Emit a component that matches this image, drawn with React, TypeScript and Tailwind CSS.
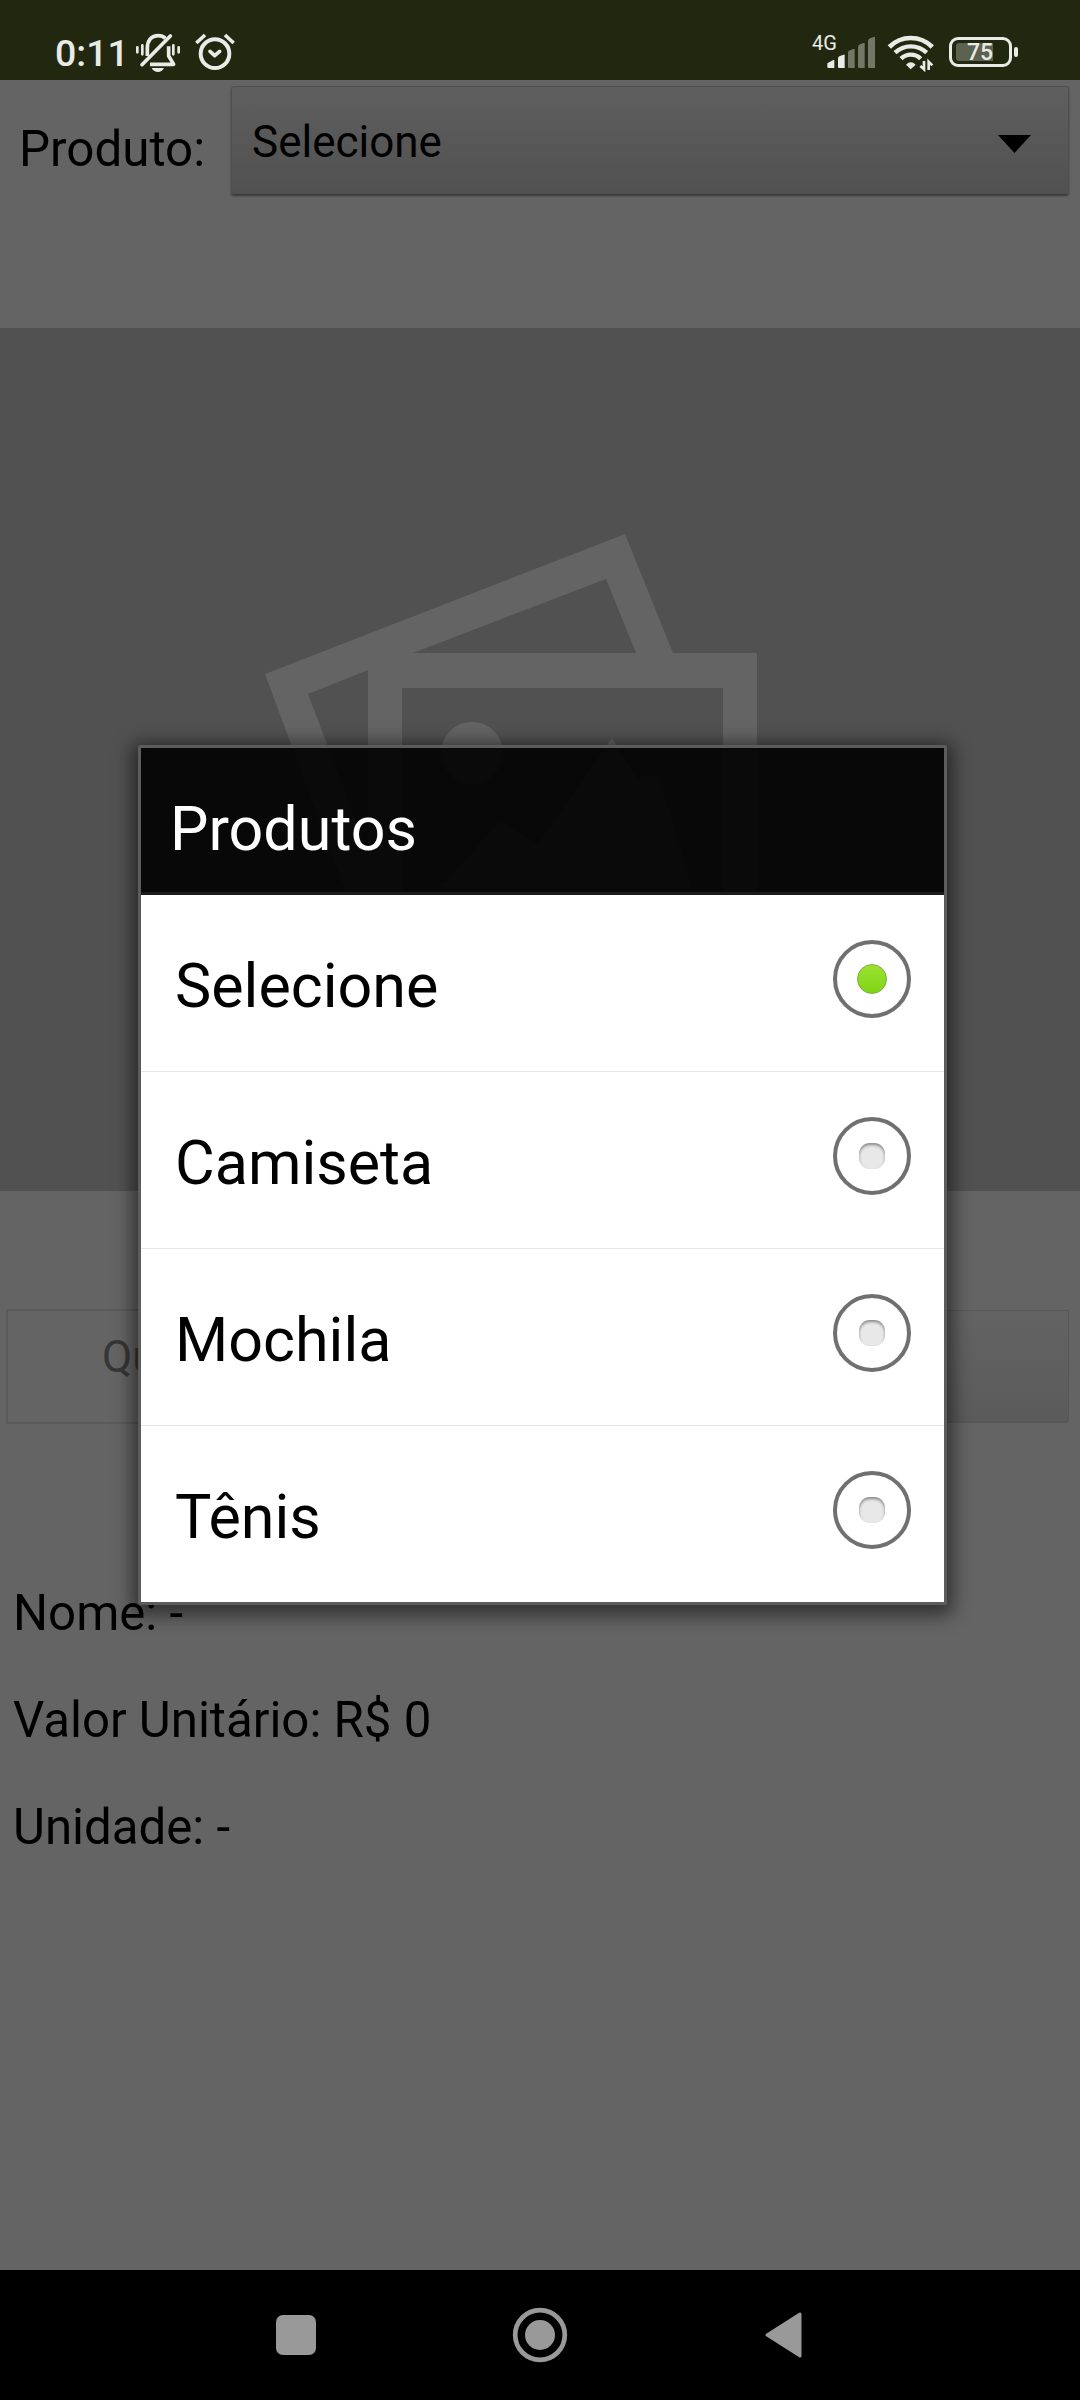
import React from "react";

function BellOffIcon() {
  return (
    <svg className="h-[44px] w-[48px] shrink-0" viewBox="402 93 144 132" fill="none" stroke="#e9ebe6">
      <g strokeLinecap="round" strokeWidth="8">
        <path d="M412 142V157M427 136V163M520 136V163M536 142V157" />
        <path d="M442 168V145C442 121 454 107 475 107C484 107 491 110 496 115" strokeWidth="11" strokeLinecap="butt" />
        <path d="M450 193H521L506 168V139" strokeWidth="11" strokeLinejoin="round" strokeLinecap="butt" />
        <path d="M426 194L511 108" strokeWidth="11" />
      </g>
      <path d="M455 204H492C488 212 481 216 474 216C466 216 459 212 455 204Z" fill="#e9ebe6" stroke="none" />
    </svg>
  );
}

function AlarmIcon() {
  return (
    <svg className="h-[44px] w-[44px] shrink-0" viewBox="578 93 132 132" fill="none" stroke="#e9ebe6">
      <circle cx="644" cy="161" r="43" strokeWidth="12" />
      <path d="M629 154L643 167L658 154" strokeWidth="11" strokeLinecap="round" strokeLinejoin="round" />
      <path d="M588 129L614 105M674 105L700 129" strokeWidth="11" />
    </svg>
  );
}

function SignalIcon() {
  return (
    <svg className="h-[44px] w-[50px] shrink-0" viewBox="138 87 150 132">
      <g fill="#e9ebe6">
        <path d="M142 190L160 180H163V204H145Q142 204 142 201Z" />
        <path d="M174 174Q175 170 180 168L190 164H194V204H177Q174 204 174 201Z" />
      </g>
      <g fill="#727768">
        <path d="M204 157Q205 153 210 151L220 147H224V204H207Q204 204 204 201Z" />
        <path d="M234 140Q235 136 240 133L250 129H254V204H237Q234 204 234 201Z" />
        <path d="M264 122Q265 118 270 115L281 111H285V204H267Q264 204 264 201Z" />
      </g>
    </svg>
  );
}

function WifiIcon() {
  return (
    <svg className="h-[44px] w-[50px] shrink-0" viewBox="318 87 150 132" fill="none" stroke="#e9ebe6">
      <path d="M328 141Q355 114 392 114Q430 114 457 141" strokeWidth="14" />
      <path d="M345 158Q366 139 392 139Q420 139 440 158" strokeWidth="13" />
      <path d="M363 176Q376 164 392 164Q410 164 422 176" strokeWidth="13" />
      <path d="M378 194Q392 180 407 194L392 208Z" fill="#e9ebe6" stroke="none" />
      <path d="M432 183V208L421 198M446 210V185L457 196" strokeWidth="8" />
    </svg>
  );
}

function BatteryIcon() {
  return (
    <div className="flex items-center">
      <div className="relative flex h-[30px] w-[63px] items-center rounded-[9px] border-[3px] border-[#e9ebe6] pl-[4px]">
        <div className="h-[18px] w-[37px] rounded-l-[3px] bg-[#5c6150]" />
        <span className="absolute left-[15px] top-[-1px] text-[23px] font-medium leading-[27px] text-[#e9ebe6]">75</span>
      </div>
      <div className="ml-[2px] h-[10px] w-[4px] rounded-[2px] bg-[#e9ebe6]" />
    </div>
  );
}

function StatusBar() {
  return (
    <header className="flex h-[80px] items-start justify-between bg-[#222810] text-[#e9ebe6]">
      <div className="flex items-start pl-[55px] pt-[31px]">
        <span className="w-[79px] text-[37.5px] font-medium leading-[44px]">0:11</span>
        <BellOffIcon />
        <div className="ml-[11px]">
          <AlarmIcon />
        </div>
      </div>
      <div className="flex items-start pr-[62px] pt-[29px]">
        <span className="mt-[2px] w-[14px] text-[20px] leading-[24px]">4G</span>
        <SignalIcon />
        <div className="ml-[10px]">
          <WifiIcon />
        </div>
        <div className="ml-[13px] mt-[8px]">
          <BatteryIcon />
        </div>
      </div>
    </header>
  );
}

function ProductField() {
  return (
    <div className="flex h-[248px] items-start">
      <span className="w-[231px] pl-[19px] pt-[40px] text-[49.3px] leading-[58px]">Produto:</span>
      <button className="mt-[6px] flex h-[108px] w-[838px] items-center justify-between rounded-[3px] border border-[#4f4f4f] bg-linear-to-b from-[#5f5f5f] to-[#515151] pl-[20px] pr-[37px] text-left shadow-[0_2px_2px_#3a3a3a]">
        <span className="mt-[3px] text-[44px] leading-[52px]">Selecione</span>
        <svg className="mt-[7px] h-[18px] w-[33px]" viewBox="0 0 33 18">
          <path d="M0 0H33L16.5 18Z" fill="#000" />
        </svg>
      </button>
    </div>
  );
}

function PhotoPlaceholder() {
  return (
    <div className="h-[863px] bg-[#515151]">
      <svg className="h-full w-full" viewBox="0 327 1080 863" fill="#646464">
        <path
          fillRule="evenodd"
          d="M265 673L625 533L673 652H757V985H368V951L265 673ZM308 693L368 851V669ZM413 652H636L606 578ZM402 687V951H723V687Z"
        />
        <circle cx="472" cy="752" r="31" />
        <path d="M441 886L500 820L538 843L612 737L638 778L658 774L692 886Z" />
      </svg>
    </div>
  );
}

function QuantityRow() {
  return (
    <div className="flex h-[369px] items-start pl-[6px] pt-[118px]">
      <div className="flex h-[115px] w-[520px] items-center border-2 border-[#5a5a5a] pl-[94px] text-[44px] text-[#363636]">
        <span className="mt-[-19px] leading-[52px]">Qu</span>
      </div>
      <div className="ml-[5px] mt-px h-[113px] w-[538px] rounded-[3px] border border-b-2 border-[#575757] bg-linear-to-b from-[#636363] to-[#5b5b5b]" />
    </div>
  );
}

const details = ["Nome: -", "Valor Unitário: R$ 0", "Unidade: -"];

function Details() {
  return (
    <div className="flex flex-1 flex-col pl-[13px] text-[49.2px]">
      {details.map((line) => (
        <p key={line} className="h-[107px] leading-[107px]">
          {line}
        </p>
      ))}
    </div>
  );
}

function Radio({ checked }: { checked: boolean }) {
  return (
    <div className="flex h-[78px] w-[78px] items-center justify-center rounded-full border-4 border-[#707070] bg-white">
      {checked ? (
        <div className="h-[30px] w-[30px] rounded-full border border-[#80a850] bg-linear-to-b from-[#9be22f] to-[#80d512]" />
      ) : (
        <div className="h-[26px] w-[26px] rounded-[11px] bg-[#e8e8e8] shadow-[inset_0_2px_3px_#888]" />
      )}
    </div>
  );
}

const options = ["Selecione", "Camiseta", "Mochila", "Tênis"];

function ProductDialog() {
  return (
    <div className="absolute left-[138px] top-[745px] w-[809px] rounded-[3px] border-[3px] border-[#5c5c5c] shadow-[0_4px_18px_6px_rgba(0,0,0,0.5)]">
      <h1 className="h-[147px] border-b-[3px] border-[#1b1b1b] bg-black/90 bg-clip-padding pl-[29px] pt-[46px] text-[61px] leading-[71px] text-white">
        Produtos
      </h1>
      <ul className="bg-white">
        {options.map((option, i) => (
          <li
            key={option}
            className="flex h-[177px] items-center justify-between border-b border-[#e6e6e6] pl-[34px] pr-[33px] last:h-[176px] last:border-b-0"
          >
            <span className="pt-[7px] text-[61px] leading-[71px]">{option}</span>
            <div className="mt-[-8px]">
              <Radio checked={i === 0} />
            </div>
          </li>
        ))}
      </ul>
    </div>
  );
}

function NavigationBar() {
  return (
    <nav className="flex h-[130px] items-center bg-black pl-[276px]">
      <div className="h-[40px] w-[40px] rounded-[7px] bg-[#999]" />
      <svg className="ml-[195.5px] h-[56px] w-[56px]" viewBox="0 0 56 56">
        <circle cx="28" cy="28" r="24.8" fill="none" stroke="#999" strokeWidth="4.7" />
        <circle cx="28" cy="28" r="15" fill="#999" />
      </svg>
      <svg className="ml-[196px] h-[48px] w-[40px]" viewBox="0 0 40 48">
        <path d="M3 24L36 3V45Z" fill="#999" stroke="#999" strokeWidth="3" strokeLinejoin="round" />
      </svg>
    </nav>
  );
}

export default function App() {
  return (
    <div className="relative flex h-[2400px] w-[1080px] flex-col overflow-hidden bg-[#646464] font-['Roboto',sans-serif] text-black">
      <StatusBar />
      <main className="flex flex-1 flex-col">
        <ProductField />
        <PhotoPlaceholder />
        <QuantityRow />
        <Details />
      </main>
      <NavigationBar />
      <ProductDialog />
    </div>
  );
}
